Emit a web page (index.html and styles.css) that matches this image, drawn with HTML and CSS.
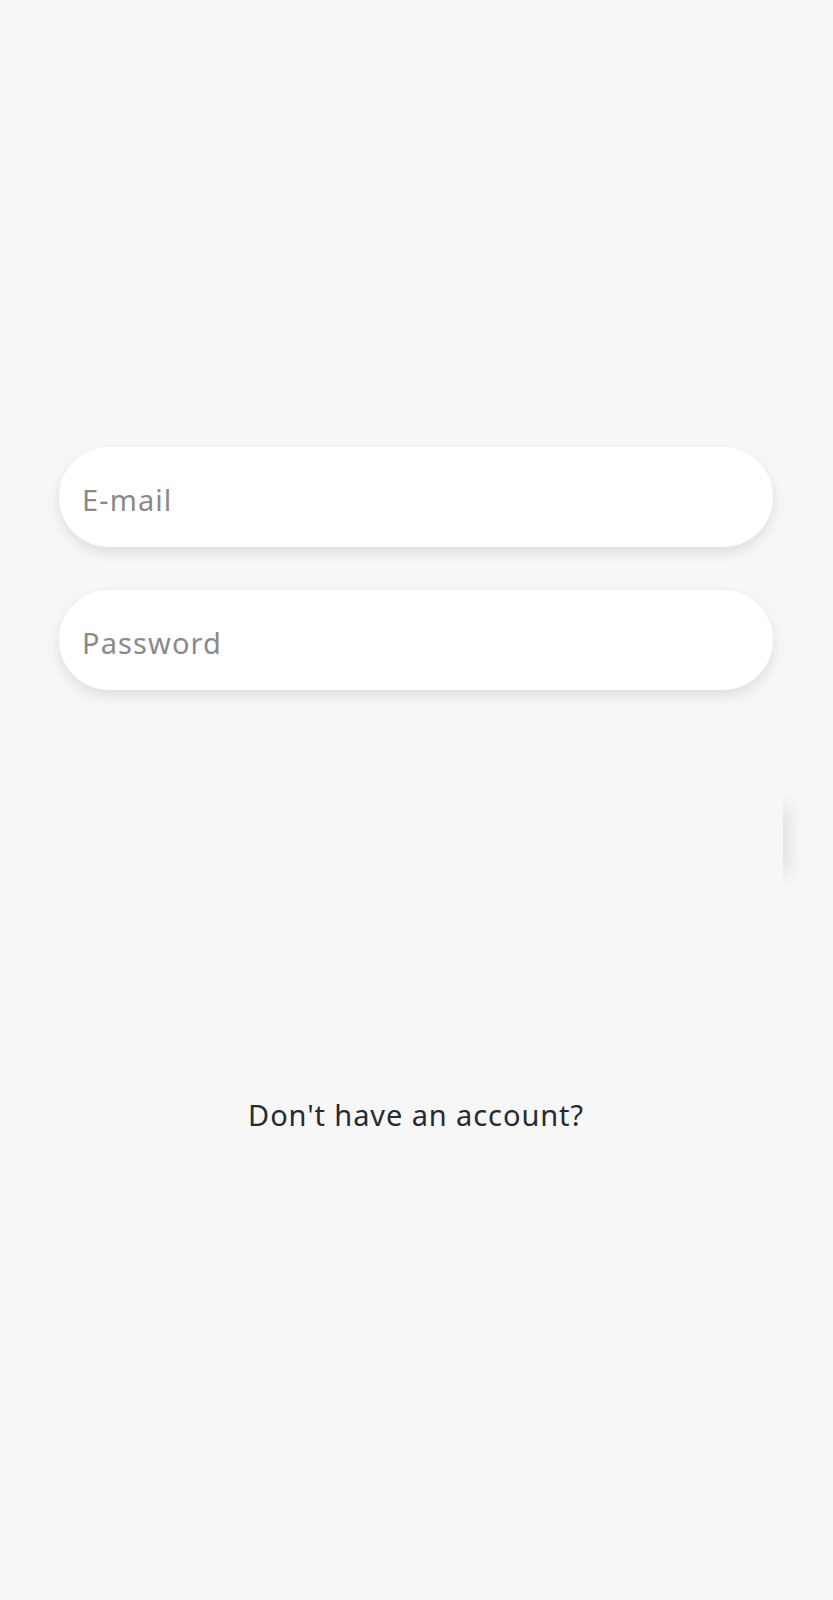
FILE: index.html
```html
<!DOCTYPE html>
<html>
<head>
<meta charset="utf-8">
<link rel="stylesheet" href="styles.css">
</head>
<body>
<main class="page">
  <form class="form">
    <div class="field"><span class="placeholder">E-mail</span></div>
    <div class="field"><span class="placeholder">Password</span></div>
  </form>
  <div class="edge-shadow"></div>
  <p class="signup">Don't have an account?</p>
</main>
</body>
</html>
```
FILE: styles.css
```css
html, body {
  margin: 0;
  padding: 0;
  background: #f7f7f7;
}
.page {
  position: relative;
  width: 833px;
  height: 1600px;
  box-sizing: border-box;
  padding: 447px 60px 0 59px;
  font-family: "Noto Sans", "DejaVu Sans", sans-serif;
}
.form {
  display: flex;
  flex-direction: column;
  gap: 43px;
}
.field {
  height: 100px;
  background: #ffffff;
  border-radius: 50px;
  box-shadow: 0 6px 14px rgba(0, 0, 0, 0.10);
  display: flex;
  align-items: center;
  padding-left: 23px;
  padding-top: 4px;
  box-sizing: border-box;
}
.placeholder {
  font-size: 29px;
  letter-spacing: 1.1px;
  color: #8a8a8a;
}
.edge-shadow {
  position: absolute;
  left: 783px;
  top: 792px;
  width: 17px;
  height: 96px;
  background: linear-gradient(to right, rgba(0,0,0,0.07), rgba(0,0,0,0));
  -webkit-mask-image: linear-gradient(to bottom, transparent, #000 30%, #000 70%, transparent);
  mask-image: linear-gradient(to bottom, transparent, #000 30%, #000 70%, transparent);
}
.signup {
  margin: 405px 0 0;
  text-align: center;
  font-size: 29px;
  letter-spacing: 0.9px;
  color: #262b30;
}
```
